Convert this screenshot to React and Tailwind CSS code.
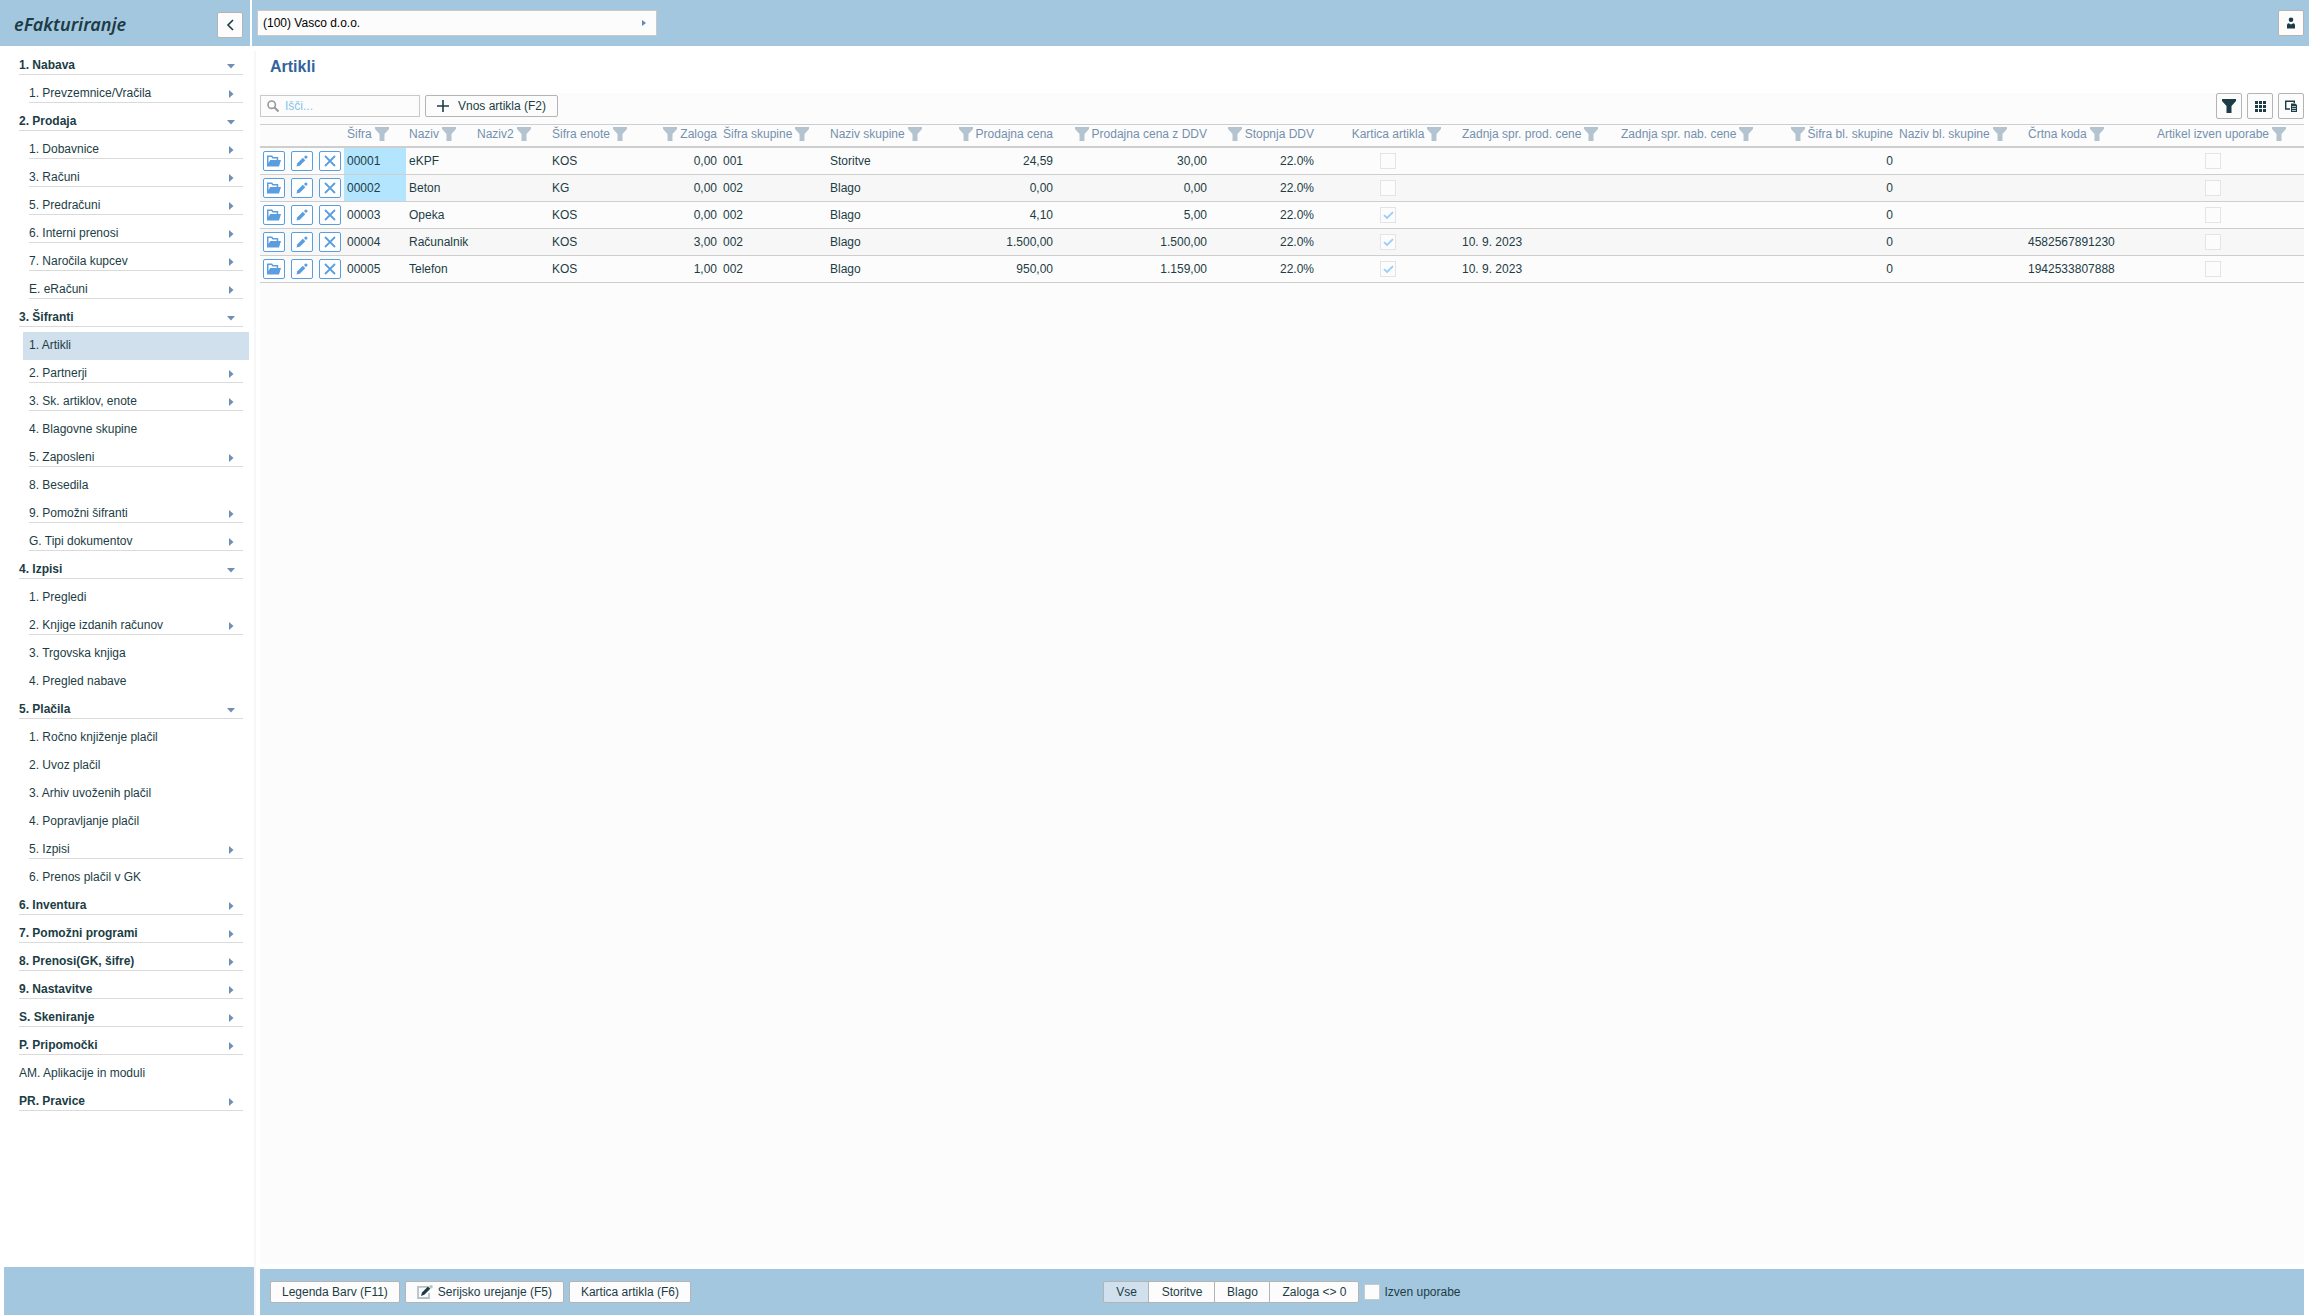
import React, { useState } from "react";

const MENU = [
  { label: "1. Nabava", top: true, arrow: "down" },
  { label: "1. Prevzemnice/Vračila", arrow: "right" },
  { label: "2. Prodaja", top: true, arrow: "down" },
  { label: "1. Dobavnice", arrow: "right" },
  { label: "3. Računi", arrow: "right" },
  { label: "5. Predračuni", arrow: "right" },
  { label: "6. Interni prenosi", arrow: "right" },
  { label: "7. Naročila kupcev", arrow: "right" },
  { label: "E. eRačuni", arrow: "right" },
  { label: "3. Šifranti", top: true, arrow: "down" },
  { label: "1. Artikli" },
  { label: "2. Partnerji", arrow: "right" },
  { label: "3. Sk. artiklov, enote", arrow: "right" },
  { label: "4. Blagovne skupine" },
  { label: "5. Zaposleni", arrow: "right" },
  { label: "8. Besedila" },
  { label: "9. Pomožni šifranti", arrow: "right" },
  { label: "G. Tipi dokumentov", arrow: "right" },
  { label: "4. Izpisi", top: true, arrow: "down" },
  { label: "1. Pregledi" },
  { label: "2. Knjige izdanih računov", arrow: "right" },
  { label: "3. Trgovska knjiga" },
  { label: "4. Pregled nabave" },
  { label: "5. Plačila", top: true, arrow: "down" },
  { label: "1. Ročno knjiženje plačil" },
  { label: "2. Uvoz plačil" },
  { label: "3. Arhiv uvoženih plačil" },
  { label: "4. Popravljanje plačil" },
  { label: "5. Izpisi", arrow: "right" },
  { label: "6. Prenos plačil v GK" },
  { label: "6. Inventura", top: true, arrow: "right" },
  { label: "7. Pomožni programi", top: true, arrow: "right" },
  { label: "8. Prenosi(GK, šifre)", top: true, arrow: "right" },
  { label: "9. Nastavitve", top: true, arrow: "right" },
  { label: "S. Skeniranje", top: true, arrow: "right" },
  { label: "P. Pripomočki", top: true, arrow: "right" },
  { label: "AM. Aplikacije in moduli", top: true },
  { label: "PR. Pravice", top: true, arrow: "right" },
];

const COLUMNS = [
  { key: "sifra", label: "Šifra", width: "w-[62px]" },
  { key: "naziv", label: "Naziv", width: "w-[68px]" },
  { key: "naziv2", label: "Naziv2", width: "w-[75px]" },
  { key: "enota", label: "Šifra enote", width: "w-[91px]" },
  { key: "zaloga", label: "Zaloga", width: "w-[80px]", align: "right" },
  { key: "sifraSk", label: "Šifra skupine", width: "w-[107px]" },
  { key: "nazivSk", label: "Naziv skupine", width: "w-[119px]" },
  { key: "cena", label: "Prodajna cena", width: "w-[110px]", align: "right" },
  { key: "cenaDdv", label: "Prodajna cena z DDV", width: "w-[154px]", align: "right" },
  { key: "ddv", label: "Stopnja DDV", width: "w-[107px]", align: "right" },
  { key: "kartica", label: "Kartica artikla", width: "w-[142px]", align: "center" },
  { key: "sprProd", label: "Zadnja spr. prod. cene", width: "w-[159px]" },
  { key: "sprNab", label: "Zadnja spr. nab. cene", width: "w-[152px]" },
  { key: "sifraBl", label: "Šifra bl. skupine", width: "w-[126px]", align: "right" },
  { key: "nazivBl", label: "Naziv bl. skupine", width: "w-[129px]" },
  { key: "koda", label: "Črtna koda", width: "w-[97px]" },
  { key: "izven", label: "Artikel izven uporabe", width: "w-[182px]", align: "center" },
];

const ROWS = [
  { sifra: "00001", naziv: "eKPF", enota: "KOS", zaloga: "0,00", sifraSk: "001", nazivSk: "Storitve", cena: "24,59", cenaDdv: "30,00", ddv: "22.0%", kartica: false, sifraBl: "0", izven: false, marked: true },
  { sifra: "00002", naziv: "Beton", enota: "KG", zaloga: "0,00", sifraSk: "002", nazivSk: "Blago", cena: "0,00", cenaDdv: "0,00", ddv: "22.0%", kartica: false, sifraBl: "0", izven: false, marked: true },
  { sifra: "00003", naziv: "Opeka", enota: "KOS", zaloga: "0,00", sifraSk: "002", nazivSk: "Blago", cena: "4,10", cenaDdv: "5,00", ddv: "22.0%", kartica: true, sifraBl: "0", izven: false },
  { sifra: "00004", naziv: "Računalnik", enota: "KOS", zaloga: "3,00", sifraSk: "002", nazivSk: "Blago", cena: "1.500,00", cenaDdv: "1.500,00", ddv: "22.0%", kartica: true, sprProd: "10. 9. 2023", sifraBl: "0", koda: "4582567891230", izven: false },
  { sifra: "00005", naziv: "Telefon", enota: "KOS", zaloga: "1,00", sifraSk: "002", nazivSk: "Blago", cena: "950,00", cenaDdv: "1.159,00", ddv: "22.0%", kartica: true, sprProd: "10. 9. 2023", sifraBl: "0", koda: "1942533807888", izven: false },
];

const VIEWS = [
  { label: "Vse", width: "w-[46px]" },
  { label: "Storitve", width: "w-[67px]" },
  { label: "Blago", width: "w-[56px]" },
  { label: "Zaloga <> 0", width: "w-[90px]" },
];

const ALIGN = { left: "text-left", right: "text-right", center: "text-center" };

// ── Icons ─────────────────────────────────────────────────
function Funnel({ className = "" }) {
  return (
    <svg viewBox="0 0 14 14" className={`w-[14px] h-[14px] shrink-0 ${className}`} fill="currentColor" aria-hidden="true">
      <path d="M0 0h14v2L9.500 7V14h-5V7L0 2z" />
    </svg>
  );
}

function Caret({ dir }) {
  return (
    <svg viewBox="0 0 8 8" className="mt-0.5 w-2 h-2" fill="#6f8fb0" aria-hidden="true">
      {dir === "down" ? <path d="M0 2h8L4 6.500z" /> : <path d="M2 0v8l4.500-4z" />}
    </svg>
  );
}

function FolderIcon() {
  return (
    <svg viewBox="0 0 14 12" className="w-[14px] h-3" fill="#5b9ee0" aria-hidden="true">
      <path d="M0 11.500V.5h5.200l1 1.500h5V5H9.700V3.500H5.400L4.400 2H1.500v6L3.200 5H14l-2 6.500z" />
    </svg>
  );
}

function PencilIcon() {
  return (
    <svg viewBox="0 0 12 12" className="w-3 h-3" fill="#5b9ee0" aria-hidden="true">
      <path d="M.5 11.500l.8-3.300L6.800 2.700l2.500 2.500-5.500 5.500z" />
      <circle cx="9.900" cy="2.100" r="1.600" />
    </svg>
  );
}

function CrossIcon() {
  return (
    <svg viewBox="0 0 12 12" className="w-3 h-3" fill="none" stroke="#5b9ee0" strokeWidth="1.800" aria-hidden="true">
      <path d="M1 1l10 10M11 1L1 11" />
    </svg>
  );
}

// ── Small controls ────────────────────────────────────────
function RowButton({ label, children }) {
  return (
    <button
      type="button"
      aria-label={label}
      className="flex h-5 w-[22px] items-center justify-center rounded-xs border border-[#5b9ee0] bg-white"
    >
      {children}
    </button>
  );
}

function IconButton({ label, children }) {
  return (
    <button
      type="button"
      aria-label={label}
      className="flex h-[26px] w-[26px] items-center justify-center rounded-xs border border-[#b4b4b4] bg-[#fcfcfc]"
    >
      {children}
    </button>
  );
}

function CellCheck({ checked, label }) {
  return (
    <span className="relative mx-auto block h-4 w-4">
      <input
        type="checkbox"
        aria-label={label}
        defaultChecked={checked}
        className="peer block h-4 w-4 appearance-none border border-[#e4e4e4] bg-[#fcfcfc]"
      />
      <svg
        viewBox="0 0 16 16"
        className="pointer-events-none absolute inset-0 hidden h-4 w-4 peer-checked:block"
        fill="none"
        stroke="#99ccff"
        strokeWidth="1.800"
        aria-hidden="true"
      >
        <path d="M4 8.200L7 11l6-5.800" />
      </svg>
    </span>
  );
}

function FooterButton({ children }) {
  return (
    <button
      type="button"
      className="flex h-[22px] items-center gap-[5px] rounded-xs border border-[#b4b4b4] bg-[#fcfcfc] px-[11px] whitespace-nowrap"
    >
      {children}
    </button>
  );
}

function Header() {
  return (
    <header className="flex h-[46px] shrink-0 gap-[2px] bg-white">
      <div className="flex w-[250px] shrink-0 items-center justify-between bg-[#a4c7e0] pr-[7px] pl-[14px] pt-1">
        <span className="pb-0.5 font-['Noto_Sans','Open_Sans',sans-serif] text-lg leading-6 font-semibold italic">
          eFakturiranje
        </span>
        <IconButton label="Skrij meni">
          <svg viewBox="0 0 8 12" className="h-3 w-2" fill="none" stroke="currentColor" strokeWidth="1.600" aria-hidden="true">
            <path d="M7 1L2 6l5 5" />
          </svg>
        </IconButton>
      </div>
      <div className="flex grow items-center justify-between bg-[#a4c7e0] px-[5px]">
        <button
          type="button"
          className="flex h-[26px] w-[400px] items-center justify-between border border-[#c9c9c9] bg-[#fcfcfc] pr-[10px] pl-[5px] text-black"
        >
          (100) Vasco d.o.o.
          <svg viewBox="0 0 4 6" className="h-[6px] w-1" fill="#5a8bb8" aria-hidden="true">
            <path d="M0 0v6l4-3z" />
          </svg>
        </button>
        <IconButton label="Uporabnik">
          <svg viewBox="0 0 10 12" className="h-3 w-[10px]" fill="currentColor" aria-hidden="true">
            <circle cx="5" cy="2.700" r="2.300" />
            <path d="M1 11.500V8q0-1.800 1.800-1.800L5 7.500l2.200-1.300Q9 6.200 9 8v3.500z" />
          </svg>
        </IconButton>
      </div>
    </header>
  );
}

function Sidebar({ active, onSelect }) {
  return (
    <aside className="mt-[5px] flex w-64 shrink-0 flex-col border-r-2 border-[#f7f7f7]">
      <nav className="grow pt-px">
        <ul>
          {MENU.map((item, i) => {
            const selected = i === active;
            return (
              <li key={item.label} className={item.top ? "pl-[13px] pr-[5px]" : "pl-[23px] pr-[5px]"}>
                <a
                  href="#"
                  onClick={(e) => {
                    e.preventDefault();
                    onSelect(i);
                  }}
                  className={`block h-7 px-[6px] ${selected ? "bg-[#d0e0ed]" : ""}`}
                >
                  <span
                    className={`flex h-[23px] items-center justify-between border-b pt-1 pr-2 leading-[18px] ${
                      item.arrow ? "border-[#dadada]" : "border-transparent"
                    } ${item.top && item.arrow ? "font-bold" : ""}`}
                  >
                    {item.label}
                    {item.arrow && <Caret dir={item.arrow} />}
                  </span>
                </a>
              </li>
            );
          })}
        </ul>
      </nav>
      <div className="ml-1 h-12 shrink-0 bg-[#a4c7e0]" />
    </aside>
  );
}

function HeadCell({ col }) {
  const align = col.align || "left";
  return (
    <th
      scope="col"
      className={`h-6 border-t border-b-2 border-[#cecece] px-[3px] pt-0 pb-[3px] font-normal whitespace-nowrap ${ALIGN[align]}`}
    >
      {align === "center" ? (
        <span className="relative inline-block align-middle">
          {col.label}
          <Funnel className="absolute top-px left-full ml-[3px] text-[#b4c3d0]" />
        </span>
      ) : (
        <span className={`flex items-center gap-[3px] ${align === "right" ? "flex-row-reverse" : ""}`}>
          {col.label}
          <Funnel className="text-[#b4c3d0]" />
        </span>
      )}
    </th>
  );
}

function ArticleTable() {
  return (
    <table className="w-full table-fixed border-separate border-spacing-0">
      <colgroup>
        <col className="w-[84px]" />
        {COLUMNS.map((c) => (
          <col key={c.key} className={c.width} />
        ))}
      </colgroup>
      <thead className="text-[#7490ad]">
        <tr>
          <td className="border-t border-b-2 border-[#cecece]" />
          {COLUMNS.map((c) => (
            <HeadCell key={c.key} col={c} />
          ))}
        </tr>
      </thead>
      <tbody>
        {ROWS.map((row) => (
          <tr key={row.sifra} className="even:bg-[#f7f7f7]">
            <td className="h-[27px] border-b border-[#cecece] px-[3px] py-0">
              <div className="flex gap-[6px]">
                <RowButton label={`Odpri ${row.naziv}`}><FolderIcon /></RowButton>
                <RowButton label={`Uredi ${row.naziv}`}><PencilIcon /></RowButton>
                <RowButton label={`Briši ${row.naziv}`}><CrossIcon /></RowButton>
              </div>
            </td>
            {COLUMNS.map((c) => (
              <td
                key={c.key}
                className={`h-[27px] border-b border-[#cecece] px-[3px] py-0 whitespace-nowrap ${ALIGN[c.align || "left"]} ${
                  c.key === "sifra" && row.marked ? "bg-[#b3e5ff]" : ""
                }`}
              >
                {typeof row[c.key] === "boolean" ? (
                  <CellCheck checked={row[c.key]} label={`${c.label} ${row.sifra}`} />
                ) : (
                  row[c.key]
                )}
              </td>
            ))}
          </tr>
        ))}
      </tbody>
    </table>
  );
}

function Toolbar() {
  return (
    <div className="flex h-[26px] items-center gap-[5px]">
      <label className="flex h-[22px] w-40 items-center gap-[6px] border border-[#c9c9c9] bg-[#fcfcfc] pl-[6px]">
        <svg viewBox="0 0 12 12" className="h-3 w-3 shrink-0" fill="none" stroke="#999999" aria-hidden="true">
          <circle cx="4.700" cy="4.700" r="3.700" strokeWidth="1.600" />
          <path d="M7.500 7.500l4 4" strokeWidth="2" />
        </svg>
        <input
          type="text"
          aria-label="Išči"
          placeholder="Išči..."
          className="w-full min-w-0 bg-transparent outline-none placeholder:text-[#85c5ea]"
        />
      </label>
      <button
        type="button"
        className="flex h-[22px] items-center gap-[9px] rounded-xs border border-[#b4b4b4] bg-[#fcfcfc] px-[11px]"
      >
        <svg viewBox="0 0 12 12" className="h-3 w-3" fill="none" stroke="currentColor" strokeWidth="1.600" aria-hidden="true">
          <path d="M6 0v12M0 6h12" />
        </svg>
        Vnos artikla (F2)
      </button>
      <div className="ml-auto flex gap-[5px]">
        <IconButton label="Filter">
          <Funnel />
        </IconButton>
        <IconButton label="Stolpci">
          <svg viewBox="0 0 11 11" className="h-[11px] w-[11px]" fill="currentColor" aria-hidden="true">
            <path d="M0 0h3v3H0zM4 0h3v3H4zM8 0h3v3H8zM0 4h3v3H0zM4 4h3v3H4zM8 4h3v3H8zM0 8h3v3H0zM4 8h3v3H4zM8 8h3v3H8z" />
          </svg>
        </IconButton>
        <IconButton label="Izvoz">
          <svg viewBox="0 0 12 12" className="h-3 w-3" aria-hidden="true">
            <path d="M5 9H.7V1.200h8.600V3" fill="none" stroke="currentColor" strokeWidth="1.400" />
            <path d="M6 3.500h4L12 5v7H6z" fill="currentColor" />
            <path d="M7 6.500h4M7 8.500h4M7 10.500h4" stroke="#fcfcfc" strokeWidth="0.700" />
          </svg>
        </IconButton>
      </div>
    </div>
  );
}

function Footer() {
  const [view, setView] = useState(0);

  return (
    <footer className="mt-[5px] mr-[5px] grid h-[46px] shrink-0 grid-cols-[1fr_auto_1fr] items-center bg-[#a4c7e0]">
      <div className="flex gap-[5px] pl-[10px]">
        <FooterButton>Legenda Barv (F11)</FooterButton>
        <FooterButton>
          <svg viewBox="0 0 16 14" className="h-[14px] w-4" aria-hidden="true">
            <path d="M11 1.800H1V13h11V8" fill="none" stroke="#b4c3c8" strokeWidth="1.800" />
            <path d="M4 11l1-3.500L11 1.500l2.300 2.300-6 6z" fill="currentColor" />
            <circle cx="14" cy="1.800" r="1.800" fill="#b4c3c8" />
          </svg>
          Serijsko urejanje (F5)
        </FooterButton>
        <FooterButton>Kartica artikla (F6)</FooterButton>
      </div>
      <div className="flex items-center">
        <div className="flex">
          {VIEWS.map((v, i) => (
            <button
              key={v.label}
              type="button"
              onClick={() => setView(i)}
              className={`-mr-px h-[22px] border border-[#b4b4b4] first:rounded-l-xs last:mr-0 last:rounded-r-xs ${v.width} ${
                i === view ? "bg-[#d0e0ed]" : "bg-[#fcfcfc]"
              }`}
            >
              {v.label}
            </button>
          ))}
        </div>
        <label className="ml-[5px] flex items-center gap-1">
          <input type="checkbox" className="h-4 w-4 appearance-none border border-[#c9c9c9] bg-[#fcfcfc] checked:bg-[#99ccff]" />
          Izven uporabe
        </label>
      </div>
    </footer>
  );
}

// ── MAIN ──────────────────────────────────────────────────
export default function App() {
  const [active, setActive] = useState(10);

  return (
    <div className="flex min-h-screen flex-col bg-white font-['Liberation_Sans',Arial,sans-serif] text-xs text-[#1c3d45]">
      <Header />
      <div className="flex grow">
        <Sidebar active={active} onSelect={setActive} />
        <main className="flex min-w-0 grow flex-col pl-1">
          <h1 className="h-[47px] pt-[9px] pl-[10px] text-base leading-6 font-bold text-[#33639c]">Artikli</h1>
          <section className="mr-[5px] grow bg-[#fcfcfc]">
            <Toolbar />
            <div className="pt-[5px]">
              <ArticleTable />
            </div>
          </section>
          <Footer />
        </main>
      </div>
    </div>
  );
}
